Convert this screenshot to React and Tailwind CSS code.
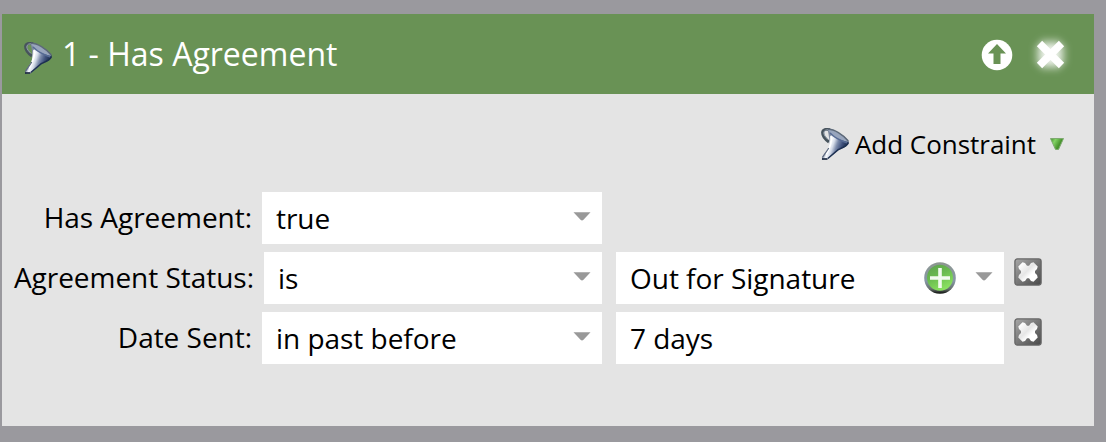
import React from "react";

function Funnel({ id }) {
  return (
    <svg width="28" height="32" viewBox="0 0 28 32" className="block shrink-0">
      <defs>
        <linearGradient id={id} x1="7" y1="13" x2="24" y2="19" gradientUnits="userSpaceOnUse">
          <stop offset="0" stopColor="#7e8a9e" />
          <stop offset="0.180" stopColor="#f8faff" />
          <stop offset="0.340" stopColor="#d5dce8" />
          <stop offset="0.540" stopColor="#7c8bab" />
          <stop offset="0.780" stopColor="#42547f" />
          <stop offset="1" stopColor="#263659" />
        </linearGradient>
        <filter id={id + "s"} x="-10%" y="-10%" width="120%" height="120%">
          <feGaussianBlur stdDeviation="0.600" />
        </filter>
      </defs>
      <g filter={`url(#${id}s)`}>
        <path d="M9 1.800 C5 0.600 1.800 1.500 1.600 4.500 C1.500 8 4 11 8 14" fill="none" stroke="#46535c" strokeWidth="3" />
        <path d="M8.500 2 C5 1.500 3 2.200 2.800 5 C3 7.500 5 9.500 7 11.500" fill="none" stroke="#98a4b2" strokeWidth="1" />
        <path d="M6.500 1.500 C11 0 24 7.500 27.600 13.500 C28.500 17 24 19.500 17.500 22 C14 25 9 29 6.500 31.500 H0.800 C1 29 5 24 7.500 20 C9 14 8 7 6.500 1.500Z" fill={`url(#${id})`} />
        <path d="M7 1.500 C12 0.500 23 7.500 27.300 14 C21 13 10 8 7 1.500Z" fill="#98a5bd" />
        <path d="M7 1.300 C13 1 22 6.500 27.300 13" fill="none" stroke="#5d6979" strokeWidth="1.500" />
        <path d="M9 5 C14 10 20 13 26.500 15" fill="none" stroke="#566a94" strokeWidth="1.500" />
        <path d="M10 8 C11 13 10 18 5 26" fill="none" stroke="#ffffff" strokeWidth="1.800" />
        <path d="M27.300 14.500 C26.500 18 21 20 17.500 21.500 L6.800 30.500" fill="none" stroke="#1f3051" strokeWidth="1.500" />
        <path d="M7.800 20 C6 23 3 27 1.300 29.500" fill="none" stroke="#5d6980" strokeWidth="1.200" />
        <path d="M1 31 H6.500" stroke="#101e35" strokeWidth="1.600" />
      </g>
    </svg>
  );
}

function Arrow() {
  return (
    <svg width="18" height="10" viewBox="0 0 18 10" className="block shrink-0">
      <path d="M0.500 0.300H17.500L10.500 7.800Q9 9 7.500 7.800Z" fill="#999" />
    </svg>
  );
}

function Remove({ id }) {
  return (
    <button className="ml-[10px] mt-[6px] block h-7 w-7 shrink-0">
      <svg width="28" height="28" viewBox="0 0 28 28" className="block">
        <defs>
          <linearGradient id={id} x1="0" y1="0" x2="1" y2="1">
            <stop offset="0" stopColor="#a8a8a8" />
            <stop offset="0.500" stopColor="#777" />
            <stop offset="1" stopColor="#484848" />
          </linearGradient>
          <linearGradient id={id + "x"} x1="0" y1="0" x2="1" y2="1">
            <stop offset="0.100" stopColor="#fff" />
            <stop offset="0.450" stopColor="#e6e6e6" />
            <stop offset="0.650" stopColor="#fff" />
          </linearGradient>
        </defs>
        <rect x="0.900" y="0.900" width="26.200" height="26.200" rx="2.500" fill={`url(#${id})`} stroke="#666" strokeWidth="1.300" />
        <path d="M4.300 8.500 L8.500 4.300 L11 5 L13 7.800 H15 L17 5 L19.500 4.300 L23.700 8.500 L23 11 L21 13 V15 L23 17 L23.700 19.500 L19.500 23.700 L17 23 L15 20.200 H13 L11 23 L8.500 23.700 L4.300 19.500 L5 17 L7 15 V13 L5 11Z" fill={`url(#${id}x)`} />
      </svg>
    </button>
  );
}

function Label({ children, className = "" }) {
  return (
    <div className={"shrink-0 whitespace-nowrap text-right leading-[50px] " + className}>
      {children}
    </div>
  );
}

function Field({ children, className = "", right }) {
  return (
    <div className={"flex h-[52px] shrink-0 justify-between whitespace-nowrap bg-white pl-[14px] pr-[11px] leading-[52px] " + className}>
      <span>{children}</span>
      {right}
    </div>
  );
}

export default function App() {
  return (
    <div className="h-[442px] w-[1106px] overflow-hidden bg-[#9a999e] pl-[2px] pt-[14px] font-['Open_Sans',sans-serif] text-[28px] tracking-[-0.03px] text-black">
      <div className="h-[412px] w-[1092px] bg-[#e4e4e4]">
        <header className="flex h-20 items-start bg-[#699255] pl-[22px] text-white">
          <div className="mt-7"><Funnel id="f1" /></div>
          <h1 className="ml-[10px] whitespace-nowrap text-[32px] leading-[79px] tracking-normal">1 - Has Agreement</h1>
          <div className="ml-auto mr-5 flex pt-4">
            <svg width="48" height="48" viewBox="0 0 48 48" className="block">
              <circle cx="24" cy="25" r="15.300" fill="#fff" />
              <path d="M24 14 33 23.500H27.500V34H20.500V23.500H15Z" fill="#699255" />
            </svg>
            <svg width="48" height="48" viewBox="0 0 48 48" className="ml-[5px] block">
              <defs>
                <filter id="glow" x="-60%" y="-60%" width="220%" height="220%">
                  <feGaussianBlur stdDeviation="4" />
                </filter>
              </defs>
              <path d="M14.500 14.500 34.500 34.500M34.500 14.500 14.500 34.500" stroke="#fff" strokeWidth="14" opacity="0.900" filter="url(#glow)" />
              <path d="M13.500 13.500 35.500 35.500M35.500 13.500 13.500 35.500" stroke="#fff" strokeWidth="7.500" />
            </svg>
          </div>
        </header>
        <div className="flex h-[98px] justify-end pr-[29px] pt-[34px]">
          <Funnel id="f2" />
          <span className="ml-[6px] whitespace-nowrap text-[26px] leading-[32px]">Add Constraint</span>
          <svg width="16" height="14" viewBox="0 0 16 14" className="ml-[13px] mt-[9px] block">
            <defs>
              <linearGradient id="tri" x1="0" y1="0" x2="1" y2="0.500">
                <stop offset="0" stopColor="#408b2c" />
                <stop offset="0.350" stopColor="#83d365" />
                <stop offset="0.750" stopColor="#48942e" />
              </linearGradient>
            </defs>
            <path d="M1.500 1.500H14.500L9.500 12.500H6.500Z" fill="url(#tri)" stroke="#7eaa70" strokeWidth="1" />
          </svg>
        </div>
        <div className="flex flex-col gap-2">
          <div className="flex">
            <Label className="w-[250px]">Has Agreement:</Label>
            <Field className="ml-[10px] w-[340px]" right={<div className="mt-5"><Arrow /></div>}>true</Field>
          </div>
          <div className="flex">
            <Label className="w-[252px]">Agreement Status:</Label>
            <Field className="ml-[10px] w-[338px]" right={<div className="mt-5"><Arrow /></div>}>is</Field>
            <Field
              className="ml-[14px] w-[388px]"
              right={
                <div className="flex">
                  <svg width="32" height="32" viewBox="0 0 32 32" className="mr-[19px] mt-[10px] block">
                    <defs>
                      <linearGradient id="ring" x1="0" y1="0" x2="0" y2="1">
                        <stop offset="0" stopColor="#8d9690" />
                        <stop offset="0.600" stopColor="#8798a6" />
                        <stop offset="0.850" stopColor="#66706c" />
                        <stop offset="1" stopColor="#080a08" />
                      </linearGradient>
                      <linearGradient id="green" x1="0" y1="0" x2="0.500" y2="1">
                        <stop offset="0" stopColor="#5d9f4e" />
                        <stop offset="0.500" stopColor="#6abb4f" />
                        <stop offset="1" stopColor="#8ae060" />
                      </linearGradient>
                    </defs>
                    <circle cx="16" cy="16" r="15.800" fill="url(#ring)" />
                    <circle cx="16" cy="15.800" r="13" fill="url(#green)" />
                    <path d="M16 6V26M6 16H26" stroke="#f2faef" strokeWidth="3.600" />
                  </svg>
                  <div className="mt-5"><Arrow /></div>
                </div>
              }
            >
              Out for Signature
            </Field>
            <Remove id="r1" />
          </div>
          <div className="flex">
            <Label className="w-[250px]">Date Sent:</Label>
            <Field className="ml-[10px] w-[340px]" right={<div className="mt-5"><Arrow /></div>}>in past before</Field>
            <Field className="ml-[14px] w-[388px]">7 days</Field>
            <Remove id="r2" />
          </div>
        </div>
      </div>
    </div>
  );
}
